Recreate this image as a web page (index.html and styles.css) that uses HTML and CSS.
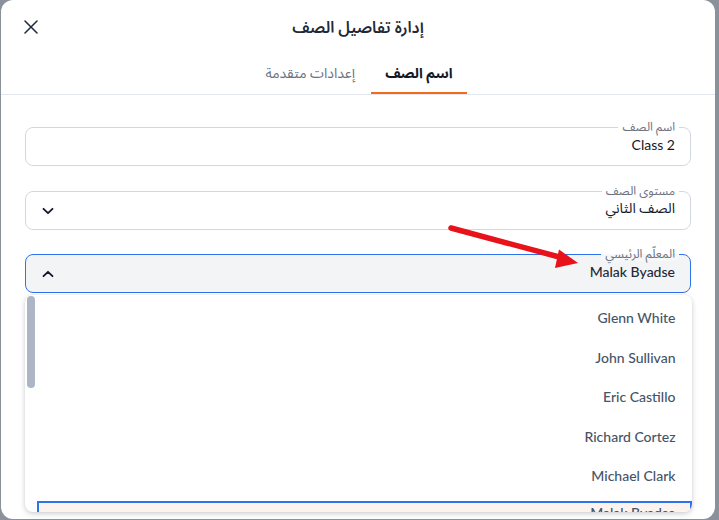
FILE: index.html
```html
<!DOCTYPE html>
<html lang="ar" dir="rtl">
<head>
<meta charset="utf-8">
<title>إدارة تفاصيل الصف</title>
<link rel="stylesheet" href="styles.css">
</head>
<body>
<div class="backdrop">
  <div class="modal">
    <header class="modal-header">
      <div class="spacer"></div>
      <h1 class="title">إدارة تفاصيل الصف</h1>
      <button class="close" aria-label="إغلاق">
        <svg width="14" height="14" viewBox="0 0 14 14"><path d="M1 1L13 13M13 1L1 13" stroke="#1e293b" stroke-width="1.5" stroke-linecap="round"/></svg>
      </button>
    </header>
    <nav class="tabs">
      <div class="tab active">اسم الصف</div>
      <div class="tab">إعدادات متقدمة</div>
    </nav>
    <div class="body">
      <div class="field">
        <span class="label">اسم الصف</span>
        <div class="value">Class 2</div>
      </div>
      <div class="field">
        <span class="label">مستوى الصف</span>
        <div class="value">الصف الثاني</div>
        <svg class="chev" width="12" height="8" viewBox="0 0 12 8"><path d="M1.5 1.8L6 6.2L10.5 1.8" fill="none" stroke="#111827" stroke-width="1.8" stroke-linecap="round" stroke-linejoin="round"/></svg>
      </div>
      <div class="field open">
        <span class="label">المعلّم الرئيسي</span>
        <div class="value strong">Malak Byadse</div>
        <svg class="chev" width="12" height="8" viewBox="0 0 12 8"><path d="M1.5 6.2L6 1.8L10.5 6.2" fill="none" stroke="#111827" stroke-width="1.8" stroke-linecap="round" stroke-linejoin="round"/></svg>
        <div class="dropdown">
          <div class="track"><div class="thumb"></div></div>
          <ul class="options">
            <li>Glenn White</li>
            <li>John Sullivan</li>
            <li>Eric Castillo</li>
            <li>Richard Cortez</li>
            <li>Michael Clark</li>
            <li class="selected">Malak Byadse</li>
          </ul>
        </div>
      </div>
    </div>
  </div>
  <svg class="arrow" width="719" height="520" viewBox="0 0 719 520">
    <path d="M451 228L563 258" stroke="#e8121a" stroke-width="5.5" stroke-linecap="round"/>
    <polygon points="578,263 559,249.5 555,268" fill="#e8121a"/>
  </svg>
</div>
</body>
</html>
```

FILE: styles.css
```css
* { box-sizing: border-box; }
html, body { margin: 0; padding: 0; }
body {
  width: 719px;
  height: 520px;
  overflow: hidden;
  background: #8b919a;
  font-family: Lato, "Noto Sans Arabic", "DejaVu Sans", sans-serif;
}
.backdrop {
  position: relative;
  width: 719px;
  height: 520px;
  padding-left: 1px;
  direction: ltr;
}
.modal {
  direction: rtl;
  width: 714px;
  height: 519px;
  background: #fff;
  border-radius: 12px;
  overflow: hidden;
  display: flex;
  flex-direction: column;
}
.modal-header {
  height: 54px;
  flex: none;
  display: grid;
  grid-template-columns: 60px 1fr 60px;
  align-items: center;
}
.title {
  margin: 0;
  text-align: center;
  font-size: 16px;
  font-weight: 600;
  color: #1f2937;
  padding-top: 1px;
}
.close {
  border: 0;
  background: none;
  padding: 0;
  width: 60px;
  height: 54px;
  display: flex;
  align-items: center;
  justify-content: center;
  cursor: pointer;
}
.tabs {
  flex: none;
  display: flex;
  justify-content: center;
  border-bottom: 1px solid #e2e6ee;
  height: 41px;
}
.tab {
  height: 40px;
  padding: 0 16px;
  display: flex;
  align-items: center;
  white-space: nowrap;
  font-size: 14px;
  color: #6b7280;
  border-bottom: 2px solid transparent;
}
.tab.active {
  color: #111827;
  font-weight: 700;
  border-bottom-color: #f26b1d;
  padding: 0 14px;
}
.body {
  padding: 32px 24px 0;
  display: flex;
  flex-direction: column;
  gap: 25px;
}
.field {
  position: relative;
  height: 39px;
  flex: none;
  border: 1px solid #d3d8e0;
  border-radius: 8px;
  display: flex;
  align-items: center;
  padding: 0 15px 0 16px;
}
.field.open {
  border: 1.5px solid #2f72ee;
  background: #f3f4f6;
  margin-top: -1px;
}
.label {
  position: absolute;
  top: -8px;
  right: 11px;
  padding: 0 4px;
  background: #fff;
  font-size: 12px;
  line-height: 14px;
  color: #6b7280;
}
.field.open .label {
  background: linear-gradient(#fff 50%, #f6f7f8 50%);
  border-radius: 4px;
}
.value {
  flex: 1;
  font-size: 14px;
  color: #111827;
  padding-bottom: 4px;
}
.value.strong { font-weight: 500; color: #1f2937; }
.chev { flex: none; }
.dropdown {
  position: absolute;
  top: calc(100% + 3px);
  left: -1.5px;
  right: -1.5px;
  height: 217px;
  background: #fff;
  border-radius: 8px;
  box-shadow: 0 1px 4px rgba(15, 23, 42, 0.18), 0 4px 10px rgba(15, 23, 42, 0.06);
  display: flex;
  direction: ltr;
  overflow: hidden;
  z-index: 2;
}
.track {
  width: 12px;
  flex: none;
  padding: 1px 2px;
}
.thumb {
  width: 8px;
  height: 92px;
  border-radius: 4px;
  background: #adb6c7;
}
.options {
  list-style: none;
  margin: 0;
  padding: 3px 0 0;
  flex: 1;
}
.options li {
  height: 39.5px;
  display: flex;
  align-items: center;
  justify-content: flex-end;
  padding-right: 16px;
  font-size: 14px;
  font-weight: 500;
  color: #465466;
}
.options li.selected {
  margin-top: 5px;
  background: #fdf3ee;
  border: 2px solid #2f72ee;
  align-items: flex-start;
  padding-top: 1px;
  padding-right: 14px;
}
.arrow {
  position: absolute;
  left: 0;
  top: 0;
  pointer-events: none;
  z-index: 5;
}
```
